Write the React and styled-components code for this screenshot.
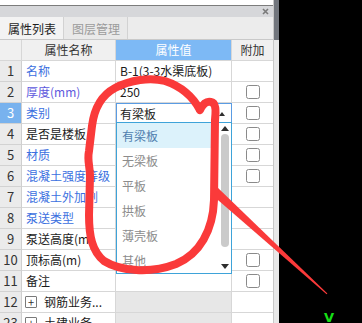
import React from "react";
import styled, { createGlobalStyle } from "styled-components";

const Global = createGlobalStyle`
  html, body { margin: 0; padding: 0; background: #000; }
  body { font-family: "Noto Sans CJK SC", "Noto Sans", sans-serif; }
  * { box-sizing: border-box; }
`;

const Screen = styled.div`
  position: relative;
  display: flex;
  width: 362px;
  height: 323px;
  overflow: hidden;
  background: #000;
`;

const Panel = styled.div`
  position: relative;
  width: 274px;
  flex: none;
  display: flex;
  flex-direction: column;
  background: #fff;
  border-right: 1px solid #c8c8c8;
  overflow: hidden;
`;

const TopStrip = styled.div`
  height: 6px;
  flex: none;
  background: #fff;
  border-bottom: 1px solid #7c7c7c;
`;

const TitleBar = styled.div`
  height: 11px;
  flex: none;
  display: flex;
  align-items: center;
  justify-content: flex-end;
  padding-right: 4px;
  background: #d6d7da;
`;

const TabBar = styled.div`
  height: 23px;
  flex: none;
  display: flex;
  background: #ececec;
  border-bottom: 1px solid #c9c9c9;
`;

const Tab = styled.div`
  display: flex;
  align-items: center;
  padding: 0 7px 0 8px;
  font-size: 12px;
  color: ${(p) => (p.$active ? "#1e1e1e" : "#9b9b9b")};
  background: ${(p) => (p.$active ? "#f3f3f3" : "#e9e9e9")};
  border-right: 1px solid #d2d2d2;
`;

const Row = styled.div`
  display: grid;
  grid-template-columns: 22px 94px 116px 41px;
  height: 21px;
  flex: none;
`;

const Cell = styled.div`
  display: flex;
  align-items: center;
  border-right: 1px solid #d7d7d7;
  border-bottom: 1px solid #d7d7d7;
  font-size: 12px;
  line-height: 20px;
  white-space: nowrap;
  overflow: hidden;
  &:last-child { border-right: none; }
`;

const NumCell = styled(Cell)`
  justify-content: center;
  font-size: 13px;
  background: ${(p) => (p.$sel ? "#78b2ee" : "#ebebeb")};
  color: ${(p) => (p.$sel ? "#fff" : "#333")};
  border-right-color: #cfcfcf;
  border-bottom-color: #d2d2d2;
`;

const HeadCell = styled(Cell)`
  justify-content: center;
  background: ${(p) => (p.$blue ? "#7db9f5" : "#f0f0f0")};
  color: ${(p) => (p.$blue ? "#fff" : "#333")};
`;

const toneColor = { link: "#3b6fe0", purple: "#5e59dd", plain: "#1b1b1b" };

const NameCell = styled(Cell)`
  padding-left: 4px;
  gap: 7px;
  color: ${(p) => toneColor[p.$tone || "plain"]};
  ${(p) => (p.$group ? "padding-left: 3px;" : "")}
`;

const ValueCell = styled(Cell)`
  padding-left: 4px;
  color: #1b1b1b;
  background: ${(p) => (p.$group ? "#e7e7e7" : "#fff")};
`;

const EditCell = styled(Cell)`
  position: relative;
  padding: 0 6px 0 3px;
  justify-content: space-between;
  color: #1b1b1b;
  border: 1px solid #5a9ce3;
  border-bottom: none;
`;

const CheckCell = styled(Cell)`
  justify-content: center;
`;

const Check = styled.span`
  width: 14px;
  height: 14px;
  border: 1px solid #8a8a8a;
  border-radius: 2.5px;
  background: #fff;
`;

const Toggle = styled.span`
  width: 12px;
  height: 12px;
  flex: none;
  border: 1px solid #7a7a7a;
  border-radius: 1px;
  display: flex;
  align-items: center;
  justify-content: center;
  font-size: 11px;
  line-height: 10px;
  color: #333;
`;

const Triangle = styled.span`
  width: 0;
  height: 0;
  border-left: ${(p) => p.$w || 3}px solid transparent;
  border-right: ${(p) => p.$w || 3}px solid transparent;
  ${(p) => (p.$down ? "border-top" : "border-bottom")}: ${(p) => p.$h || 4}px solid #2e2e2e;
`;

const Dropdown = styled.div`
  position: absolute;
  left: 116px;
  top: 122px;
  width: 116px;
  height: 152px;
  display: grid;
  grid-template-columns: 1fr 13px;
  background: #fff;
  border: 1px solid #3ea3d9;
`;

const Items = styled.div`
  display: flex;
  flex-direction: column;
`;

const Item = styled.div`
  height: 25px;
  display: flex;
  align-items: center;
  padding-left: 5px;
  font-size: 12px;
  color: ${(p) => (p.$active ? "#4f7eae" : "#8c8c8c")};
  background: ${(p) => (p.$active ? "#dcf2fb" : "#fff")};
`;

const ScrollBar = styled.div`
  display: flex;
  flex-direction: column;
  align-items: center;
  padding: 3px 0 4px;
  gap: 3px;
`;

const Thumb = styled.div`
  width: 8px;
  height: 113px;
  border-radius: 4px;
  background: #cacaca;
`;

const Spacer = styled.div`
  flex: 1;
`;

const SideStrip = styled.div`
  width: 5px;
  flex: none;
  display: flex;
  flex-direction: column;
  background: #e8e8e8;
`;

const SideThumb = styled.div`
  height: 40px;
  background: #72767d;
`;

const Dark = styled.div`
  flex: 1;
  padding: 311px 0 0 45px;
  color: #16e016;
  font-family: "DejaVu Sans", sans-serif;
  font-size: 13px;
  font-weight: bold;
  line-height: 14px;
`;

const Overlay = styled.svg`
  position: absolute;
  left: 0;
  top: 0;
  pointer-events: none;
`;

const rows = [
  { n: 1, name: "名称", tone: "link", value: "B-1(3-3水渠底板)" },
  { n: 2, name: "厚度(mm)", tone: "purple", value: "250", check: true },
  { n: 3, name: "类别", tone: "link", edit: "有梁板", check: true, sel: true },
  { n: 4, name: "是否是楼板", tone: "plain", check: true },
  { n: 5, name: "材质", tone: "link", check: true },
  { n: 6, name: "混凝土强度等级", tone: "link", check: true },
  { n: 7, name: "混凝土外加剂", tone: "link" },
  { n: 8, name: "泵送类型", tone: "link" },
  { n: 9, name: "泵送高度(m)", tone: "plain" },
  { n: 10, name: "顶标高(m)", tone: "plain", check: true },
  { n: 11, name: "备注", tone: "plain", check: true },
  { n: 12, name: "钢筋业务...", group: true },
  { n: 23, name: "土建业务...", group: true },
];

const options = ["有梁板", "无梁板", "平板", "拱板", "薄壳板", "其他"];

export default function App() {
  return (
    <Screen>
      <Global />
      <Panel>
        <TopStrip />
        <TitleBar>
          <svg width="7" height="7" viewBox="0 0 7 7">
            <path d="M1 1L6 6M6 1L1 6" stroke="#7a7a7a" strokeWidth="1.6" />
          </svg>
        </TitleBar>
        <TabBar>
          <Tab $active>属性列表</Tab>
          <Tab>图层管理</Tab>
        </TabBar>
        <Row>
          <HeadCell />
          <HeadCell>属性名称</HeadCell>
          <HeadCell $blue>属性值</HeadCell>
          <HeadCell>附加</HeadCell>
        </Row>
        {rows.map((r) => (
          <Row key={r.n}>
            <NumCell $sel={r.sel}>{r.n}</NumCell>
            <NameCell $tone={r.tone} $group={r.group}>
              {r.group && <Toggle>+</Toggle>}
              {r.name}
            </NameCell>
            {r.edit ? (
              <EditCell>
                {r.edit}
                <Triangle $w={3} $h={4} />
              </EditCell>
            ) : (
              <ValueCell $group={r.group}>{r.value}</ValueCell>
            )}
            <CheckCell>{r.check && <Check />}</CheckCell>
          </Row>
        ))}
        <Dropdown>
          <Items>
            {options.map((o, i) => (
              <Item key={o} $active={i === 0}>
                {o}
              </Item>
            ))}
          </Items>
          <ScrollBar>
            <Triangle $w={4} $h={5} />
            <Thumb />
            <Spacer />
            <Triangle $w={4} $h={5} $down />
          </ScrollBar>
        </Dropdown>
      </Panel>
      <SideStrip>
        <SideThumb />
      </SideStrip>
      <Dark>V</Dark>
      <Overlay width="362" height="323" viewBox="0 0 362 323">
        <path
          d="M200 110 C203 104 207 101 211 102 C216 103 216 110 215 120 L214 200 C213 230 200 254 176 264 C150 274 120 271 104 261 C92 251 89 236 89 215 L90 176 C90 166 87 161 89 151 L92 126 C94 110 100 96 115 88 C130 80 150 77 165 81 C180 86 192 95 200 110"
          fill="none"
          stroke="#fa3a3a"
          strokeWidth="8"
          strokeLinecap="round"
          strokeLinejoin="round"
        />
        <polygon points="217,187 211,194 326.6,294.3 327.4,293.5" fill="#fa3a3a" />
      </Overlay>
    </Screen>
  );
}
